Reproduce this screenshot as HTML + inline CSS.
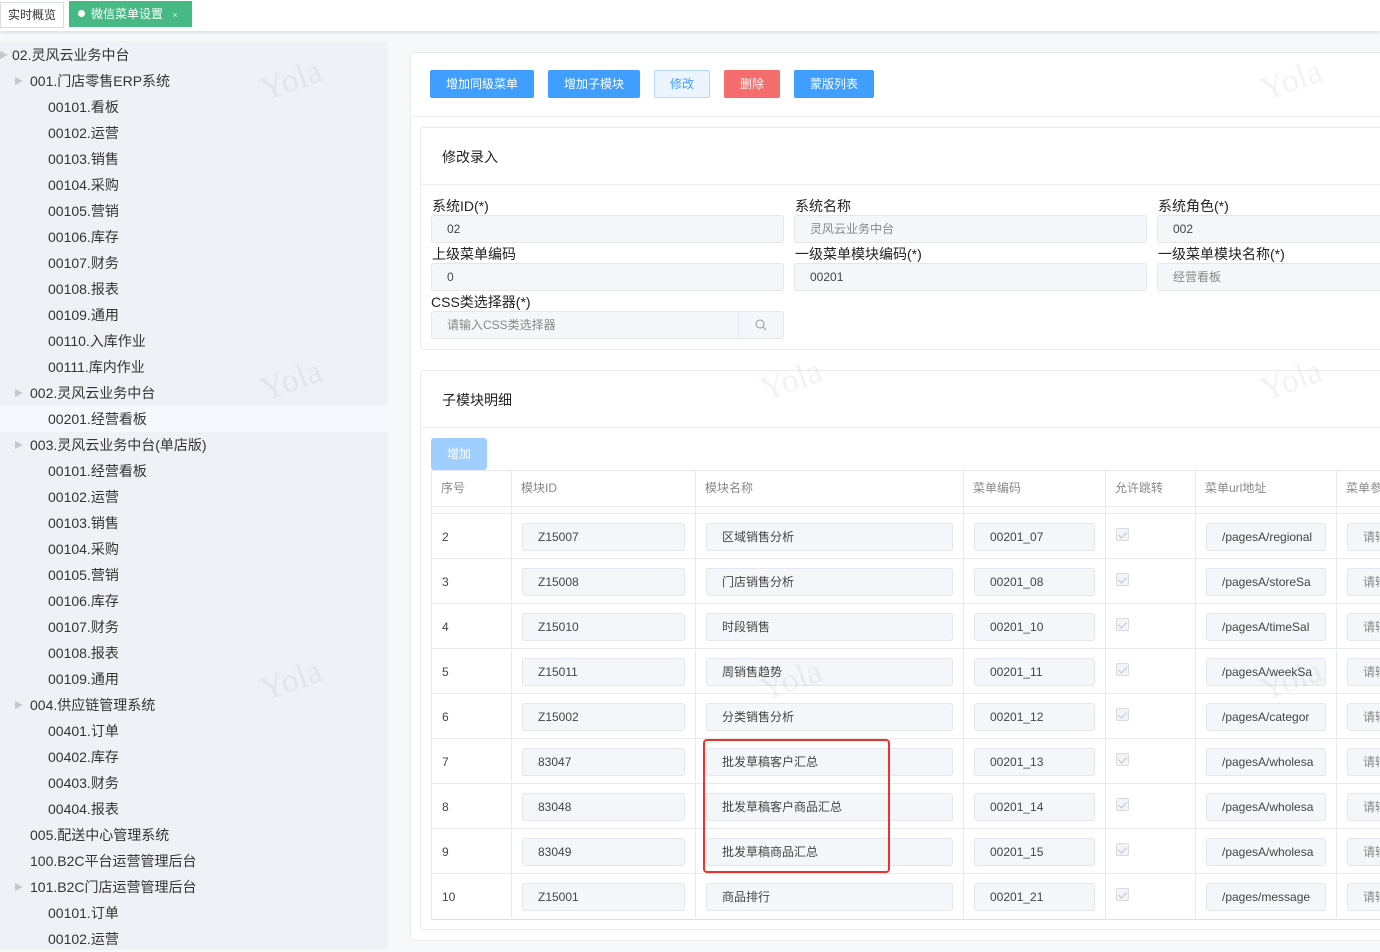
<!DOCTYPE html>
<html><head><meta charset="utf-8"><style>
*{box-sizing:border-box;margin:0;padding:0}
body{width:1380px;height:950px;overflow:hidden;background:#f7f8fa;font-family:"Liberation Sans","Noto Sans CJK SC",sans-serif;color:#333;position:relative}
.a{position:absolute}
.top{left:0;top:0;width:1380px;height:31px;background:#fff;box-shadow:0 2px 3px rgba(0,0,0,.1)}
.side{left:0;top:41px;width:388px;height:909px;background:#eef1f6}
.it{position:absolute;font-size:14px;color:#333;height:26px;line-height:26px;white-space:nowrap;margin-top:1px}
.ic{position:absolute;width:8px;height:8px;background:#c5c8cc;clip-path:polygon(0 0,100% 50%,0 100%);top:9px}
.btn{position:absolute;top:70px;height:28px;line-height:28px;color:#fff;font-size:12px;text-align:center;border-radius:2px}
.card{position:absolute;background:#fff;border:1px solid #e8ebf0;border-radius:3px}
.lbl{position:absolute;font-size:14px;color:#222}
.inp{position:absolute;height:28px;background:#f5f6f9;border:1px solid #e3e6ec;border-radius:3px;font-size:12px;color:#444;line-height:26px;padding-left:15px;white-space:nowrap;overflow:hidden}
.ph{color:#888}
.hd{position:absolute;top:470px;height:37px;line-height:37px;font-size:12px;color:#888;padding-left:10px}
.vl{position:absolute;top:470px;width:1px;height:450px;background:#e6e9ee}
.hl{position:absolute;left:431px;width:949px;height:1px;background:#e6e9ee}
.cell{position:absolute;font-size:12px;color:#444}
.cb{position:absolute;width:13px;height:13px;border:1px solid #d8dbe0;background:#f2f4f7;border-radius:2px}
.cb::after{content:"";position:absolute;left:3px;top:1px;width:4px;height:7px;border:solid #c0c4cc;border-width:0 1px 1px 0;transform:rotate(45deg)}
.wm{position:absolute;font-family:"Liberation Serif",serif;font-size:34px;color:rgba(0,0,0,.05);transform:rotate(-20deg)}
</style></head><body>
<div class="a top"></div>
<div class="a" style="left:0;top:2px;width:64px;height:26px;border:1px solid #d8dce5;font-size:12px;line-height:24px;text-align:center;color:#333">实时概览</div>
<div class="a" style="left:69px;top:1px;width:123px;height:26px;background:#47b985;font-size:12px;line-height:26px;color:#fff;padding-left:9px"><span style="display:inline-block;width:7px;height:7px;border-radius:50%;background:#fff;margin-right:6px;vertical-align:1px"></span>微信菜单设置 <span style="font-size:9px;margin-left:6px;opacity:.8">×</span></div>
<div class="a side"></div>
<div class="a" style="left:0;top:406px;width:388px;height:26px;background:#f5f8fc"></div>

<div class="it" style="left:12px;top:41px"><span class="ic" style="left:-12px"></span>02.灵风云业务中台</div>
<div class="it" style="left:30px;top:67px"><span class="ic" style="left:-15px"></span>001.门店零售ERP系统</div>
<div class="it" style="left:48px;top:93px">00101.看板</div>
<div class="it" style="left:48px;top:119px">00102.运营</div>
<div class="it" style="left:48px;top:145px">00103.销售</div>
<div class="it" style="left:48px;top:171px">00104.采购</div>
<div class="it" style="left:48px;top:197px">00105.营销</div>
<div class="it" style="left:48px;top:223px">00106.库存</div>
<div class="it" style="left:48px;top:249px">00107.财务</div>
<div class="it" style="left:48px;top:275px">00108.报表</div>
<div class="it" style="left:48px;top:301px">00109.通用</div>
<div class="it" style="left:48px;top:327px">00110.入库作业</div>
<div class="it" style="left:48px;top:353px">00111.库内作业</div>
<div class="it" style="left:30px;top:379px"><span class="ic" style="left:-15px"></span>002.灵风云业务中台</div>
<div class="it" style="left:48px;top:405px">00201.经营看板</div>
<div class="it" style="left:30px;top:431px"><span class="ic" style="left:-15px"></span>003.灵风云业务中台(单店版)</div>
<div class="it" style="left:48px;top:457px">00101.经营看板</div>
<div class="it" style="left:48px;top:483px">00102.运营</div>
<div class="it" style="left:48px;top:509px">00103.销售</div>
<div class="it" style="left:48px;top:535px">00104.采购</div>
<div class="it" style="left:48px;top:561px">00105.营销</div>
<div class="it" style="left:48px;top:587px">00106.库存</div>
<div class="it" style="left:48px;top:613px">00107.财务</div>
<div class="it" style="left:48px;top:639px">00108.报表</div>
<div class="it" style="left:48px;top:665px">00109.通用</div>
<div class="it" style="left:30px;top:691px"><span class="ic" style="left:-15px"></span>004.供应链管理系统</div>
<div class="it" style="left:48px;top:717px">00401.订单</div>
<div class="it" style="left:48px;top:743px">00402.库存</div>
<div class="it" style="left:48px;top:769px">00403.财务</div>
<div class="it" style="left:48px;top:795px">00404.报表</div>
<div class="it" style="left:30px;top:821px">005.配送中心管理系统</div>
<div class="it" style="left:30px;top:847px">100.B2C平台运营管理后台</div>
<div class="it" style="left:30px;top:873px"><span class="ic" style="left:-15px"></span>101.B2C门店运营管理后台</div>
<div class="it" style="left:48px;top:899px">00101.订单</div>
<div class="it" style="left:48px;top:925px">00102.运营</div>

<div class="card" style="left:410px;top:52px;width:980px;height:889px;border-radius:4px"></div>
<div class="btn" style="left:430px;width:104px;background:#409eff">增加同级菜单</div>
<div class="btn" style="left:548px;width:92px;background:#409eff">增加子模块</div>
<div class="btn" style="left:654px;width:56px;background:#ecf5ff;border:1px solid #b3d8ff;color:#409eff;line-height:26px">修改</div>
<div class="btn" style="left:724px;width:56px;background:#f56c6c">删除</div>
<div class="btn" style="left:794px;width:80px;background:#409eff">蒙版列表</div>
<div class="a" style="left:410px;top:116px;width:970px;height:1px;background:#ebeef3"></div>

<div class="card" style="left:420px;top:127px;width:970px;height:223px"></div>
<div class="lbl" style="left:442px;top:147px">修改录入</div>
<div class="a" style="left:421px;top:184px;width:960px;height:1px;background:#ebeef3"></div>
<div class="lbl" style="left:432px;top:196px">系统ID(*)</div>
<div class="inp" style="left:431px;top:215px;width:353px">02</div>
<div class="lbl" style="left:795px;top:196px">系统名称</div>
<div class="inp ph" style="left:794px;top:215px;width:353px">灵风云业务中台</div>
<div class="lbl" style="left:1158px;top:196px">系统角色(*)</div>
<div class="inp" style="left:1157px;top:215px;width:240px">002</div>
<div class="lbl" style="left:432px;top:244px">上级菜单编码</div>
<div class="inp" style="left:431px;top:263px;width:353px">0</div>
<div class="lbl" style="left:795px;top:244px">一级菜单模块编码(*)</div>
<div class="inp" style="left:794px;top:263px;width:353px">00201</div>
<div class="lbl" style="left:1158px;top:244px">一级菜单模块名称(*)</div>
<div class="inp ph" style="left:1157px;top:263px;width:240px">经营看板</div>
<div class="lbl" style="left:431px;top:292px">CSS类选择器(*)</div>
<div class="inp ph" style="left:431px;top:311px;width:353px">请输入CSS类选择器</div>
<div class="a" style="left:738px;top:312px;width:1px;height:26px;background:#e3e6ec"></div>
<svg class="a" style="left:755px;top:319px" width="12" height="12" viewBox="0 0 12 12"><circle cx="5" cy="5" r="4" fill="none" stroke="#999" stroke-width="1"/><path d="M8 8L11 11" stroke="#999"/></svg>

<div class="card" style="left:420px;top:370px;width:970px;height:560px"></div>
<div class="lbl" style="left:442px;top:390px">子模块明细</div>
<div class="a" style="left:421px;top:427px;width:960px;height:1px;background:#ebeef3"></div>
<div class="a" style="left:431px;top:438px;width:56px;height:32px;background:#a0cfff;border-radius:3px;color:#fff;font-size:12px;line-height:32px;text-align:center">增加</div>
<div class="hl" style="top:470px"></div>
<div class="hl" style="top:506px"></div>
<div class="hl" style="top:513px"></div>
<div class="hl" style="top:558px"></div><div class="hl" style="top:603px"></div><div class="hl" style="top:648px"></div><div class="hl" style="top:693px"></div><div class="hl" style="top:738px"></div><div class="hl" style="top:783px"></div><div class="hl" style="top:828px"></div><div class="hl" style="top:873px"></div>
<div class="hl" style="top:919px;background:#dcdfe6"></div>
<div class="vl" style="left:431px"></div><div class="vl" style="left:511px"></div><div class="vl" style="left:695px"></div><div class="vl" style="left:963px"></div><div class="vl" style="left:1105px"></div><div class="vl" style="left:1195px"></div><div class="vl" style="left:1336px"></div>
<div class="hd" style="left:431px">序号</div><div class="hd" style="left:511px">模块ID</div><div class="hd" style="left:695px">模块名称</div><div class="hd" style="left:963px">菜单编码</div><div class="hd" style="left:1105px">允许跳转</div><div class="hd" style="left:1195px">菜单url地址</div><div class="hd" style="left:1336px;width:44px;overflow:hidden;white-space:nowrap">菜单参数</div>

<div class="cell" style="left:442px;top:530px">2</div><div class="inp" style="left:522px;top:523px;width:163px">Z15007</div><div class="inp" style="left:706px;top:523px;width:247px">区域销售分析</div><div class="inp" style="left:974px;top:523px;width:121px">00201_07</div><div class="cb" style="left:1116px;top:528px"></div><div class="inp" style="left:1206px;top:523px;width:120px">/pagesA/regional</div><div class="inp ph" style="left:1347px;top:523px;width:60px">请输</div>
<div class="cell" style="left:442px;top:575px">3</div><div class="inp" style="left:522px;top:568px;width:163px">Z15008</div><div class="inp" style="left:706px;top:568px;width:247px">门店销售分析</div><div class="inp" style="left:974px;top:568px;width:121px">00201_08</div><div class="cb" style="left:1116px;top:573px"></div><div class="inp" style="left:1206px;top:568px;width:120px">/pagesA/storeSa</div><div class="inp ph" style="left:1347px;top:568px;width:60px">请输</div>
<div class="cell" style="left:442px;top:620px">4</div><div class="inp" style="left:522px;top:613px;width:163px">Z15010</div><div class="inp" style="left:706px;top:613px;width:247px">时段销售</div><div class="inp" style="left:974px;top:613px;width:121px">00201_10</div><div class="cb" style="left:1116px;top:618px"></div><div class="inp" style="left:1206px;top:613px;width:120px">/pagesA/timeSal</div><div class="inp ph" style="left:1347px;top:613px;width:60px">请输</div>
<div class="cell" style="left:442px;top:665px">5</div><div class="inp" style="left:522px;top:658px;width:163px">Z15011</div><div class="inp" style="left:706px;top:658px;width:247px">周销售趋势</div><div class="inp" style="left:974px;top:658px;width:121px">00201_11</div><div class="cb" style="left:1116px;top:663px"></div><div class="inp" style="left:1206px;top:658px;width:120px">/pagesA/weekSa</div><div class="inp ph" style="left:1347px;top:658px;width:60px">请输</div>
<div class="cell" style="left:442px;top:710px">6</div><div class="inp" style="left:522px;top:703px;width:163px">Z15002</div><div class="inp" style="left:706px;top:703px;width:247px">分类销售分析</div><div class="inp" style="left:974px;top:703px;width:121px">00201_12</div><div class="cb" style="left:1116px;top:708px"></div><div class="inp" style="left:1206px;top:703px;width:120px">/pagesA/categor</div><div class="inp ph" style="left:1347px;top:703px;width:60px">请输</div>
<div class="cell" style="left:442px;top:755px">7</div><div class="inp" style="left:522px;top:748px;width:163px">83047</div><div class="inp" style="left:706px;top:748px;width:247px">批发草稿客户汇总</div><div class="inp" style="left:974px;top:748px;width:121px">00201_13</div><div class="cb" style="left:1116px;top:753px"></div><div class="inp" style="left:1206px;top:748px;width:120px">/pagesA/wholesa</div><div class="inp ph" style="left:1347px;top:748px;width:60px">请输</div>
<div class="cell" style="left:442px;top:800px">8</div><div class="inp" style="left:522px;top:793px;width:163px">83048</div><div class="inp" style="left:706px;top:793px;width:247px">批发草稿客户商品汇总</div><div class="inp" style="left:974px;top:793px;width:121px">00201_14</div><div class="cb" style="left:1116px;top:798px"></div><div class="inp" style="left:1206px;top:793px;width:120px">/pagesA/wholesa</div><div class="inp ph" style="left:1347px;top:793px;width:60px">请输</div>
<div class="cell" style="left:442px;top:845px">9</div><div class="inp" style="left:522px;top:838px;width:163px">83049</div><div class="inp" style="left:706px;top:838px;width:247px">批发草稿商品汇总</div><div class="inp" style="left:974px;top:838px;width:121px">00201_15</div><div class="cb" style="left:1116px;top:843px"></div><div class="inp" style="left:1206px;top:838px;width:120px">/pagesA/wholesa</div><div class="inp ph" style="left:1347px;top:838px;width:60px">请输</div>
<div class="cell" style="left:442px;top:890px">10</div><div class="inp" style="left:522px;top:883px;width:163px">Z15001</div><div class="inp" style="left:706px;top:883px;width:247px">商品排行</div><div class="inp" style="left:974px;top:883px;width:121px">00201_21</div><div class="cb" style="left:1116px;top:888px"></div><div class="inp" style="left:1206px;top:883px;width:120px">/pages/message</div><div class="inp ph" style="left:1347px;top:883px;width:60px">请输</div>

<div class="a" style="left:703px;top:739px;width:187px;height:134px;border:2px solid #f0302a;border-radius:4px"></div>

<div class="wm" style="left:260px;top:62px">Yola</div>
<div class="wm" style="left:260px;top:362px">Yola</div>
<div class="wm" style="left:260px;top:662px">Yola</div>
<div class="wm" style="left:760px;top:362px">Yola</div>
<div class="wm" style="left:760px;top:662px">Yola</div>
<div class="wm" style="left:1260px;top:62px">Yola</div>
<div class="wm" style="left:1260px;top:362px">Yola</div>
<div class="wm" style="left:1260px;top:662px">Yola</div>
</body></html>
